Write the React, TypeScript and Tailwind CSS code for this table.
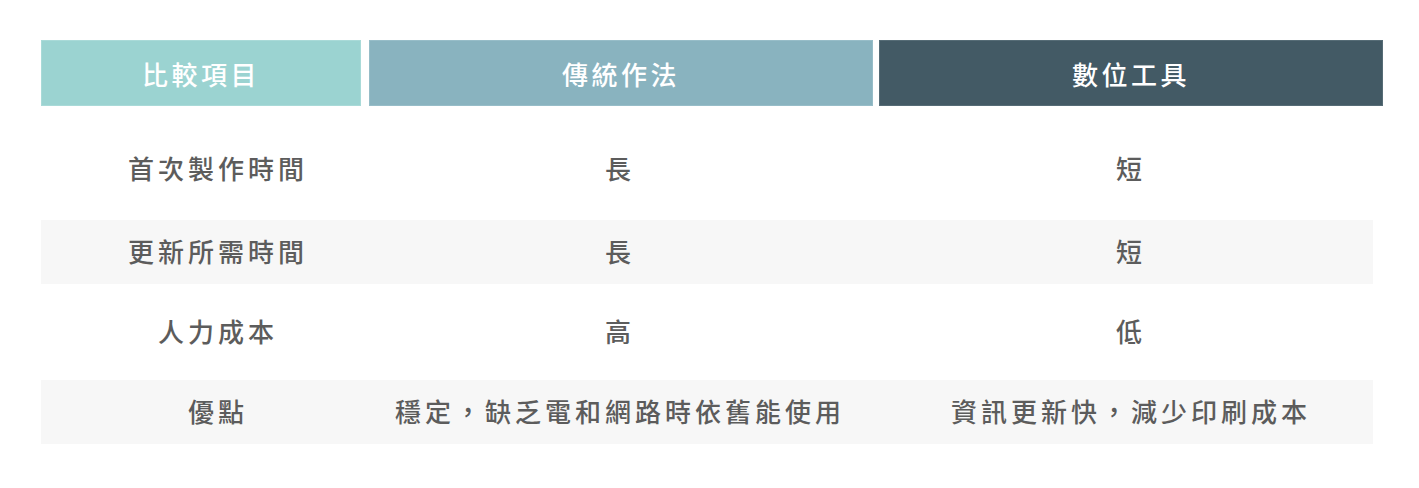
import React from "react";

interface Row {
  item: string;
  traditional: string;
  digital: string;
  shaded: boolean;
}

const rows: Row[] = [
  { item: "首次製作時間", traditional: "長", digital: "短", shaded: false },
  { item: "更新所需時間", traditional: "長", digital: "短", shaded: true },
  { item: "人力成本", traditional: "高", digital: "低", shaded: false },
  { item: "優點", traditional: "穩定，缺乏電和網路時依舊能使用", digital: "資訊更新快，減少印刷成本", shaded: true },
];

const FONT = { fontFamily: '"Noto Sans CJK TC", "Noto Sans", sans-serif' };

export default function App() {
  return (
    <div className="w-[1419px] h-[488px] bg-white pt-[40px] pl-[41px]" style={FONT}>
      {/* header */}
      <div className="flex h-[66px] text-white text-[26px] font-medium tracking-[3.5px]">
        <div className="w-[320px] flex items-center justify-center bg-[#9bd3d1] border border-[#a9dad8]">
          比較項目
        </div>
        <div className="w-[504px] ml-[8px] flex items-center justify-center bg-[#89b3bf] border border-[#97bdc8]">
          傳統作法
        </div>
        <div className="w-[504px] ml-[6px] flex items-center justify-center bg-[#435a65] border border-[#566c76]">
          數位工具
        </div>
      </div>

      {/* body */}
      <div className="mt-[34px] flex flex-col gap-[16px]">
        {rows.map((r, i) => (
          <div
            key={r.item}
            className={`w-[1332px] h-[64px] grid grid-cols-[328px_510px_494px] items-center text-[26px] font-medium tracking-[4px] text-[#5c5c5c] ${
              i === 0 ? "pb-[9px]" : "pb-[4px]"
            } ${r.shaded ? "bg-[#f7f7f7]" : ""}`}
          >
            <div className="pl-[26px] text-center">{r.item}</div>
            <div className="pr-[8px] text-center">{r.traditional}</div>
            <div className="pl-[10px] text-center">{r.digital}</div>
          </div>
        ))}
      </div>
    </div>
  );
}
